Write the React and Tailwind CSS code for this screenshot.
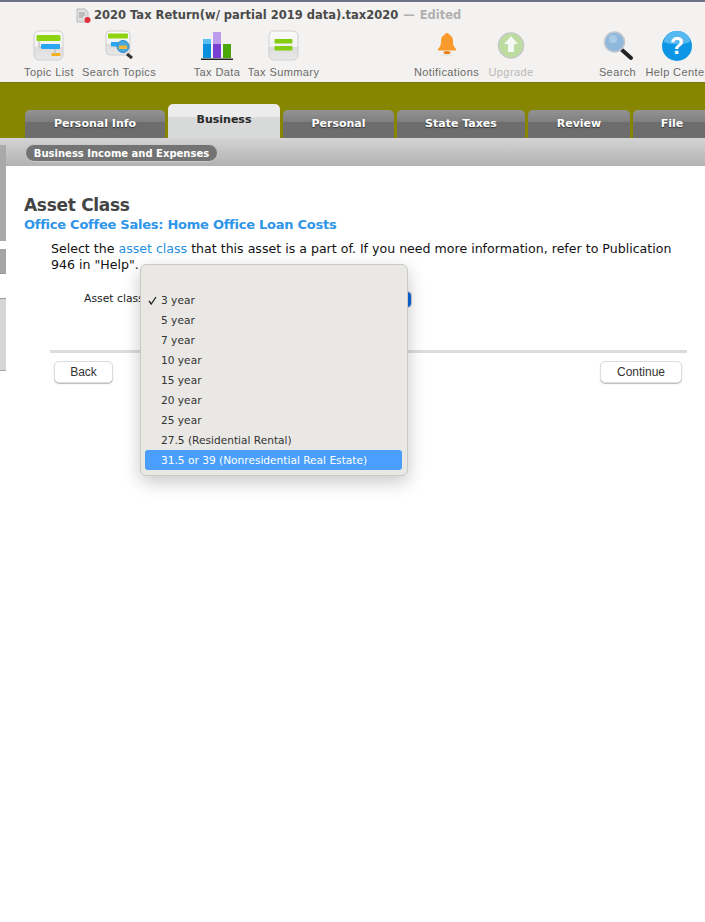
import React from "react";

const font = "font-['DejaVu_Sans',sans-serif]";

const TopicListIcon = () => (
  <svg width="32" height="32" viewBox="0 0 32 32">
    <defs>
      <linearGradient id="tile" x1="0" y1="0" x2="0" y2="1">
        <stop offset="0" stopColor="#fbfbfb" />
        <stop offset="0.55" stopColor="#f1f1f1" />
        <stop offset="0.56" stopColor="#dcdcdc" />
        <stop offset="1" stopColor="#e9e9e9" />
      </linearGradient>
    </defs>
    <rect x="1" y="1" width="29" height="29" rx="5" fill="url(#tile)" stroke="#cfcfcf" />
    <rect x="3.5" y="5" width="24" height="6" rx="1" fill="#8ed411" />
    <rect x="8" y="14" width="19" height="5" rx="1" fill="#2aa6f2" />
    <rect x="18.5" y="23" width="9" height="3" fill="#f6b11d" />
    <path d="M6 11v6h2M22 19v5" stroke="#b5b5b5" fill="none" />
  </svg>
);

const SearchTopicsIcon = () => (
  <svg width="32" height="32" viewBox="0 0 32 32">
    <rect x="3" y="1" width="24" height="24" rx="4" fill="url(#tile)" stroke="#cfcfcf" />
    <rect x="5" y="3.5" width="20" height="5" rx="1" fill="#8ed411" />
    <rect x="8" y="12" width="7" height="4.5" fill="#2aa6f2" />
    <path d="M24 24l5 4" stroke="#333" strokeWidth="3" />
    <circle cx="20" cy="16.500" r="6" fill="#4aa8dc" stroke="#2a8cc8" />
    <rect x="16" y="15.500" width="8" height="3.500" fill="#f0b93a" />
  </svg>
);

const TaxDataIcon = () => (
  <svg width="32" height="32" viewBox="0 0 32 32">
    <rect x="2" y="9" width="8" height="19" fill="#0a8fdc" />
    <rect x="2" y="9" width="8" height="5" fill="#58bdf0" />
    <rect x="12" y="2" width="8" height="26" fill="#7a3fd2" />
    <rect x="12" y="2" width="8" height="12" fill="#bd9cec" />
    <rect x="22" y="14" width="8" height="14" fill="#4aa80a" />
    <rect x="0" y="28.500" width="32" height="1.500" fill="#222" />
  </svg>
);

const TaxSummaryIcon = () => (
  <svg width="32" height="32" viewBox="0 0 32 32">
    <rect x="1" y="1" width="29" height="29" rx="5" fill="url(#tile)" stroke="#cfcfcf" />
    <rect x="6.500" y="9" width="18" height="4.500" rx="1" fill="#84cc10" />
    <rect x="6.500" y="16" width="18" height="4.500" rx="1" fill="#84cc10" />
  </svg>
);

const BellIcon = () => (
  <svg width="32" height="32" viewBox="0 0 32 32">
    <path d="M16 3c1.500 0 2 .8 2 1.600 2.800.9 4 3.400 4 6.400 0 3.700.5 5.400 3 8 .5.600.2 1.400-.7 1.400H7.700c-.9 0-1.200-.8-.7-1.400 2.500-2.600 3-4.300 3-8 0-3 1.200-5.500 4-6.400 0-.8.500-1.600 2-1.600z" fill="#fb9a2c" />
    <ellipse cx="16" cy="22.500" rx="3.500" ry="1.500" fill="#e57f17" />
    <ellipse cx="16" cy="25" rx="7" ry="0.800" fill="#e4e2de" />
  </svg>
);

const UpgradeIcon = () => (
  <svg width="32" height="32" viewBox="0 0 32 32">
    <circle cx="16" cy="15.500" r="12.500" fill="#bcdca0" stroke="#c6c9c3" strokeWidth="1.500" />
    <path d="M16 6l7 8h-4v8h-6v-8H9z" fill="#f6f8f3" />
  </svg>
);

const SearchIcon = () => (
  <svg width="32" height="32" viewBox="0 0 32 32">
    <path d="M20 20l9 8" stroke="#222" strokeWidth="4" strokeLinecap="round" />
    <circle cx="12.500" cy="12" r="10" fill="#8fb8dc" stroke="#c2c9cf" strokeWidth="1.500" />
    <circle cx="11" cy="9" r="4" fill="#a9cbe6" />
  </svg>
);

const HelpIcon = () => (
  <svg width="32" height="32" viewBox="0 0 32 32">
    <circle cx="16" cy="16" r="15" fill="#0d96e6" />
    <path d="M3 12a13 11 0 0 1 26 0c-7 3-19 3-26 0z" fill="#56b8f0" />
    <text x="16" y="24" textAnchor="middle" fontFamily="Liberation Sans" fontWeight="700" fontSize="23" fill="#fff">?</text>
  </svg>
);

const toolbarItems = [
  { label: "Topic List", icon: <TopicListIcon />, width: "w-[50px]" },
  { label: "Search Topics", icon: <SearchTopicsIcon />, width: "w-[74px]", after: "mr-[30px]" },
  { label: "Tax Data", icon: <TaxDataIcon />, width: "w-[46px]" },
  { label: "Tax Summary", icon: <TaxSummaryIcon />, width: "w-[71px]", after: "mr-[86px]" },
  { label: "Notifications", icon: <BellIcon />, width: "w-[67px]" },
  { label: "Upgrade", icon: <UpgradeIcon />, width: "w-[46px]", after: "mr-[57px]", dim: true },
  { label: "Search", icon: <SearchIcon />, width: "w-[37px]" },
  { label: "Help Center", icon: <HelpIcon />, width: "w-[66px]" },
];

const tabs = [
  { label: "Personal Info", width: "w-[140px]" },
  { label: "Business", width: "w-[112px]", active: true },
  { label: "Personal", width: "w-[111px]" },
  { label: "State Taxes", width: "w-[128px]" },
  { label: "Review", width: "w-[102px]" },
  { label: "File", width: "w-[78px]" },
];

const menuOptions = [
  "3 year",
  "5 year",
  "7 year",
  "10 year",
  "15 year",
  "20 year",
  "25 year",
  "27.5 (Residential Rental)",
  "31.5 or 39 (Nonresidential Real Estate)",
];

const Tab = ({ tab }) => {
  if (tab.active) {
    return (
      <div className={`${tab.width} shrink-0 h-[34px] rounded-t-[5px] bg-gradient-to-b from-[#ececec] from-[38%] to-[#d8d9d9] to-[38%] text-center pt-[7px] text-[11px] leading-[17px] font-bold text-[#2a2a2a]`}>
        {tab.label}
      </div>
    );
  }
  return (
    <div className={`${tab.width} shrink-0 h-[28px] rounded-t-[5px] bg-gradient-to-b from-[#939393] from-0% via-[#7f7f7f] via-[42%] to-[#6d6d6d] to-[42%] text-center pt-[5px] text-[11px] leading-[17px] font-bold text-white [text-shadow:0_1px_1px_#333]`}>
      {tab.label}
    </div>
  );
};

export default function App() {
  return (
    <div className={`${font} relative w-[705px] h-[922px] overflow-hidden bg-white`}>
      <div className="h-[2px] bg-[#6c7187]" />
      <div className="h-[81px] bg-[#f3f2f0] border-b border-[#77770a] overflow-hidden">
        <div className="flex items-center h-[28px] pl-[76px] text-[11.500px] font-bold text-[#4a4a4a]">
          <svg width="16" height="16" viewBox="0 0 16 16" className="mr-[2px]">
            <path d="M1 1h8l3 3v10H1z" fill="#dfdfdf" stroke="#bbb" />
            <path d="M3 5h6M3 7h6M3 9h4" stroke="#999" />
            <circle cx="11.500" cy="12" r="3" fill="#e0303c" />
          </svg>
          <span className="whitespace-nowrap">2020 Tax Return(w/ partial 2019 data).tax2020</span>
          <span className="ml-[5px] text-[#b0b0b0]">—</span>
          <span className="ml-[5px] text-[#b0b0b0]">Edited</span>
        </div>
        <div className="flex gap-2 pl-6 font-['Liberation_Sans',sans-serif]">
          {toolbarItems.map((item) => (
            <div key={item.label} className={`${item.width} ${item.after || ""} shrink-0 flex flex-col items-center`}>
              <div className="h-[32px] flex justify-center">{item.icon}</div>
              <div className={`mt-[3px] text-[11px] tracking-[0.4px] leading-[14px] whitespace-nowrap ${item.dim ? "text-[#b8b8b8]" : "text-[#6a6a6a]"}`}>
                {item.label}
              </div>
            </div>
          ))}
        </div>
      </div>

      <div className="h-[55px] bg-[#878600] flex items-end pl-[25px] gap-[3px]">
        {tabs.map((tab) => (
          <Tab key={tab.label} tab={tab} />
        ))}
      </div>

      <div className="h-[28px] bg-gradient-to-b from-[#d4d4d4] to-[#b2b2b2] pl-[25px] pt-[6px]">
        <div className="w-[193px] h-[18px] rounded-full bg-[#737373] border border-[#c9c9c9] text-center text-[10px] leading-[17px] font-bold text-white whitespace-nowrap">
          Business Income and Expenses
        </div>
      </div>

      <div className="flex">
        <div className="w-[6px] shrink-0 -mt-[21px] relative flex flex-col">
          <div className="h-[96px] bg-[#a9a9a9]" />
          <div className="h-[8px] bg-white" />
          <div className="h-[24px] bg-[#a5a5a5]" />
          <div className="h-[26px] bg-white border-y border-[#9a9a9a]" />
          <div className="h-[72px] bg-[#d5d5d5] border-b border-[#a5a5a5]" />
        </div>
        <div className="pl-[18px] pt-[29px] w-[699px]">
          <h1 className="text-[17px] tracking-[-0.3px] leading-[21px] font-bold text-[#444]">Asset Class</h1>
          <h2 className="text-[13px] tracking-[-0.25px] leading-[18px] font-bold text-[#2e95e8]">Office Coffee Sales: Home Office Loan Costs</h2>
          <p className="ml-[27px] mt-[7px] w-[630px] text-[12.580px] leading-[16px] text-[#111]">
            Select the <span className="text-[#1f8fe0]">asset class</span> that this asset is a part of. If you need more information, refer to Publication 946 in "Help".
          </p>
          <div className="ml-[60px] mt-[17px] flex items-center h-[18px]">
            <span className="text-[10.800px] text-[#222] whitespace-nowrap">Asset class</span>
            <div className="ml-[6px] w-[262px] h-[17px] rounded-[4px] bg-white border border-[#ccc] flex justify-end">
              <div className="w-[6px] h-full rounded-r-[4px] bg-[#0a66dc]" />
            </div>
          </div>
          <div className="ml-[26px] mt-[42px] w-[637px] h-[3px] bg-[#dcdcdc]" />
          <div className="ml-[30px] mr-[23px] mt-[8px] flex justify-between font-['Liberation_Sans',sans-serif] text-[12px] text-[#333]">
            <button className="w-[59px] h-[22px] rounded-[5px] bg-white border border-[#ddd] shadow-[0_1px_1px_#bbb]">Back</button>
            <button className="w-[82px] h-[22px] rounded-[5px] bg-white border border-[#ddd] shadow-[0_1px_1px_#bbb]">Continue</button>
          </div>
        </div>
      </div>

      <div className="absolute left-[140px] top-[264px] w-[268px] rounded-[6px] bg-[#e9e8e5] border border-[#c9c9c7] shadow-[0_6px_18px_rgba(0,0,0,0.22)] pt-[25px] pb-[5px] pl-[4px] pr-[5px]">
        {menuOptions.map((option, index) => (
          <div
            key={option}
            className={`relative h-[20px] pl-[16px] text-[10.600px] leading-[20px] whitespace-nowrap rounded-[3px] ${index === 8 ? "bg-[#4a9ffc] text-white" : "text-[#333]"}`}
          >
            {index === 0 && (
              <svg width="9" height="9" viewBox="0 0 9 9" className="absolute left-[3px] top-[6px]">
                <path d="M1 5l2.200 3L8 1" stroke="#222" strokeWidth="1.300" fill="none" />
              </svg>
            )}
            {option}
          </div>
        ))}
      </div>
    </div>
  );
}
